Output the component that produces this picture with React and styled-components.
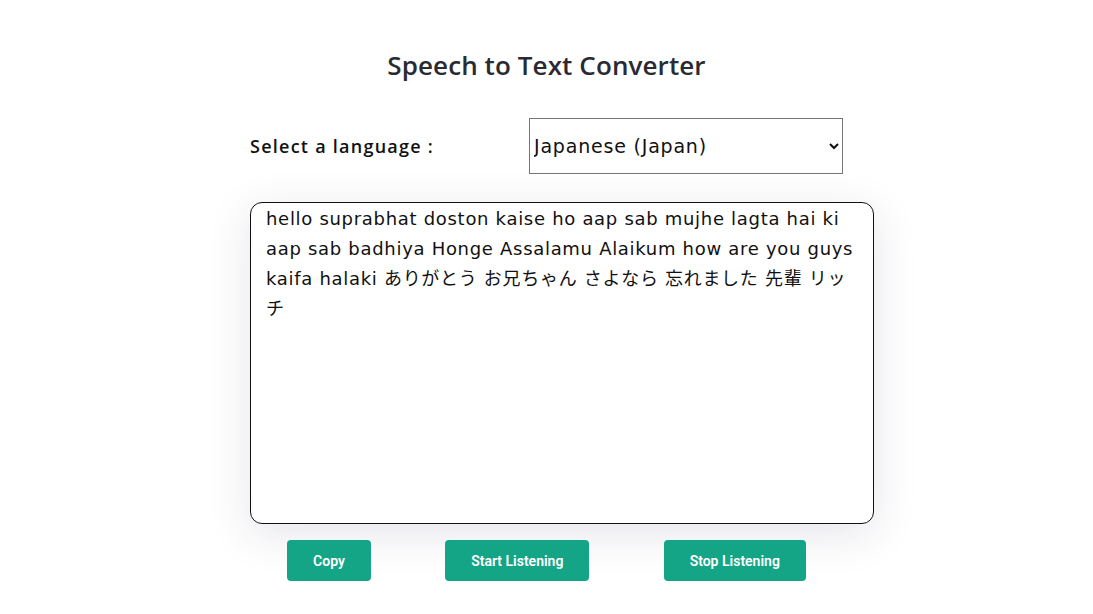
import React, { useState } from 'react';
import styled, { createGlobalStyle } from 'styled-components';

const languages = [
  'English (United States)',
  'Hindi (India)',
  'Arabic (Saudi Arabia)',
  'Japanese (Japan)',
  'French (France)'
];

const transcript =
  'hello suprabhat doston kaise ho aap sab mujhe lagta hai ki aap sab badhiya Honge Assalamu Alaikum how are you guys kaifa halaki ありがとう お兄ちゃん さよなら 忘れました 先輩 リッチ';

const GlobalStyle = createGlobalStyle`
  body {
    margin: 0;
    background: #ffffff;
    font-family: "DejaVu Sans", "Noto Sans CJK JP", sans-serif;
  }
`;

const Wrapper = styled.div`
  width: 593px;
  margin: 0 auto;
  padding-top: 47px;
`;

const Title = styled.h2`
  margin: 0;
  text-align: center;
  font-family: "Open Sans", sans-serif;
  font-size: 26px;
  font-weight: 600;
  color: #2a2a33;
  letter-spacing: 0.1px;
`;

const LanguageRow = styled.div`
  display: flex;
  align-items: center;
  justify-content: space-between;
  margin-top: 35px;

  label {
    font-family: "Open Sans", sans-serif;
    font-size: 18px;
    font-weight: 600;
    letter-spacing: 1.25px;
    color: #111;
  }
`;

const Select = styled.select`
  width: 314px;
  height: 56px;
  padding: 0;
  font-family: "DejaVu Sans", sans-serif;
  font-size: 19px;
  letter-spacing: 0.8px;
  color: #111;
  background: #fff;
  border: 1px solid #767676;
  border-radius: 0;
`;

const TextBox = styled.textarea`
  display: block;
  width: 100%;
  height: 318px;
  margin-top: 28px;
  padding: 1px 14px 1px 15px;
  box-sizing: content-box;
  font-family: "DejaVu Sans", "Noto Sans CJK JP", sans-serif;
  font-size: 18px;
  line-height: 30px;
  letter-spacing: 0.7px;
  color: #111;
  border: 1px solid #111;
  border-radius: 12px;
  resize: none;
  outline: none;
  box-shadow: 0 10px 45px rgba(40, 40, 90, 0.12);
`;

const ButtonRow = styled.div`
  display: flex;
  justify-content: space-around;
  margin-top: 16px;
`;

const Button = styled.button`
  height: 41px;
  padding: 0 26px;
  font-family: Roboto, sans-serif;
  font-size: 14px;
  font-weight: 600;
  color: #fff;
  background: #14a586;
  border: none;
  border-radius: 4px;
  cursor: pointer;
`;

const App = () => {
  const [language, setLanguage] = useState('Japanese (Japan)');
  const [text, setText] = useState(transcript);

  return (
    <>
      <GlobalStyle />
      <Wrapper>
        <Title>Speech to Text Converter</Title>
        <LanguageRow>
          <label htmlFor="lang">Select a language :</label>
          <Select id="lang" value={language} onChange={e => setLanguage(e.target.value)}>
            {languages.map(l => <option key={l}>{l}</option>)}
          </Select>
        </LanguageRow>
        <TextBox value={text} onChange={e => setText(e.target.value)} />
        <ButtonRow>
          <Button>Copy</Button>
          <Button>Start Listening</Button>
          <Button>Stop Listening</Button>
        </ButtonRow>
      </Wrapper>
    </>
  );
};

export default App;
